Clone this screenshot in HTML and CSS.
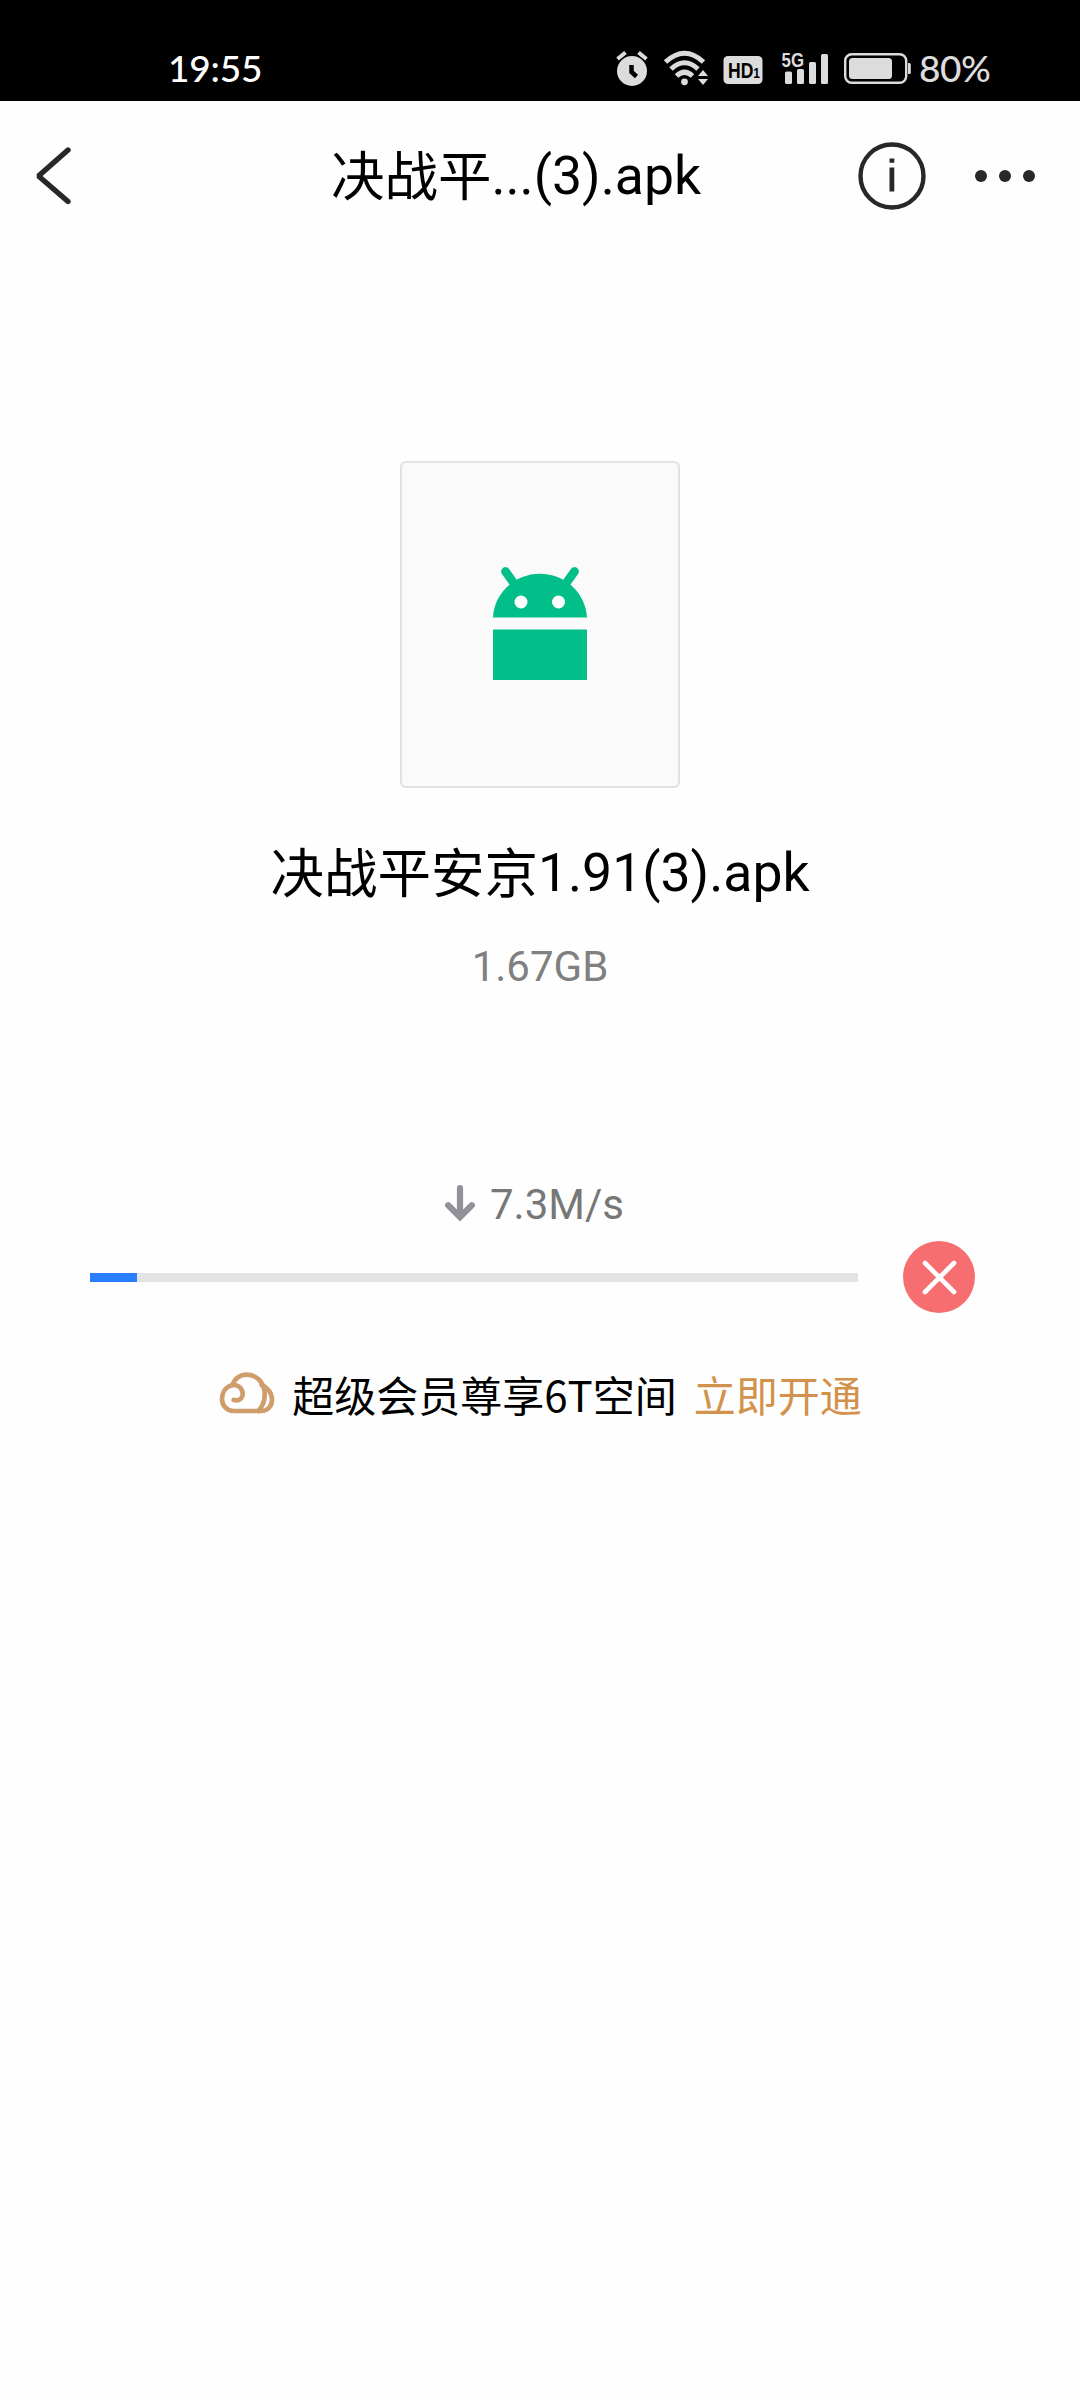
FILE: index.html
```html
<!DOCTYPE html>
<html lang="zh-CN">
<head>
<meta charset="utf-8">
<title>决战平安京1.91(3).apk</title>
<link rel="stylesheet" href="styles.css">
</head>
<body>
<div class="status">
  <span class="time">19:55</span>
  <div class="indicators">
    <svg class="alarm" width="34" height="36" viewBox="615 51 34 36"><circle cx="632" cy="71" r="15" fill="#dcdcdc"/><path d="M617.500 59l8-6.500M646.500 59l-8-6.500" stroke="#dcdcdc" stroke-width="4"/><path d="M631.500 65v7l5 4.500" fill="none" stroke="#000" stroke-width="4.500"/></svg>
    <svg class="wifi" width="46" height="36" viewBox="663 51 46 36"><g fill="none" stroke="#dcdcdc" stroke-width="5"><path d="M665.500 62q19-17.500 38 0"/><path d="M671 69q13.500-12.500 27 0"/><path d="M676.500 76q8-7.500 16 0"/></g><circle cx="684.500" cy="81.800" r="3.400" fill="#dcdcdc"/><path d="M698 76l5-6 5 6zM698 79h10l-5 6z" fill="#dcdcdc"/></svg>
    <svg class="hd" width="40" height="30" viewBox="723 55 40 30"><rect x="723.500" y="56" width="39" height="28" rx="4.500" fill="#dcdcdc"/><text class="hd-text" x="728" y="78.300" textLength="32" lengthAdjust="spacingAndGlyphs">HD<tspan class="hd-one">1</tspan></text></svg>
    <svg class="signal" width="49" height="36" viewBox="781 50 49 36"><text class="net" x="781.500" y="67" textLength="22.500" lengthAdjust="spacingAndGlyphs">5G</text><g fill="#dcdcdc"><rect x="785" y="71.500" width="7" height="12.500" rx="1.500"/><rect x="797" y="69" width="7" height="15" rx="1.500"/><rect x="809" y="62" width="7" height="22" rx="1.500"/><rect x="821" y="54" width="7" height="30" rx="1.500"/></g></svg>
    <svg class="battery" width="68" height="32" viewBox="844 53 68 32"><rect x="845.200" y="54.200" width="61" height="28.600" rx="6.500" fill="none" stroke="#dcdcdc" stroke-width="2.400"/><rect x="849" y="58" width="43" height="21" rx="3.500" fill="#dcdcdc"/><path d="M908 63h1.500q1.300 0 1.300 1.500v8q0 1.500-1.300 1.500H908z" fill="#dcdcdc"/></svg>
    <span class="percent">80%</span>
  </div>
</div>
<header class="topbar">
  <svg class="back" width="40" height="62" viewBox="34 145 40 62"><path d="M68 150L38.500 176l29.500 25.500" fill="none" stroke="#282828" stroke-width="5.400" stroke-linecap="round" stroke-linejoin="bevel"/></svg>
  <h1 class="title"><span class="han">决战平</span>...(3).apk</h1>
  <svg class="info" width="68" height="68" viewBox="0 0 68 68"><circle cx="34" cy="34" r="31.500" fill="none" stroke="#282828" stroke-width="4.400"/><path d="M31.500 16.500h4.800v4.200h-4.800zM31.500 25.500h4.800v24h-4.800z" fill="#282828"/></svg>
  <svg class="more" width="60" height="12" viewBox="0 0 60 12" fill="#282828"><circle cx="6" cy="6" r="6"/><circle cx="30" cy="6" r="6"/><circle cx="54" cy="6" r="6"/></svg>
</header>
<main class="content">
  <div class="file-card">
    <svg width="94" height="113" viewBox="0 0 94 113" fill="#02bf8a"><path d="M0 50.500C1 27 21 6.800 47 6.800S93 27 94 50.500zM0 62.500h94v50.500H0z"/><path d="M12.500 4.500L25 22M81.500 4.500L69 22" stroke="#02bf8a" stroke-width="8.800" stroke-linecap="round"/><circle cx="28" cy="35" r="6.500" fill="#fff"/><circle cx="65.500" cy="35" r="6.500" fill="#fff"/></svg>
  </div>
  <div class="name"><span class="han">决战平安京</span>1.91(3).apk</div>
  <div class="size">1.67GB</div>
  <div class="speed">
    <svg width="30" height="36" viewBox="0 0 30 36"><path d="M15 3v28M3.200 20.200L15 32l11.800-11.800" fill="none" stroke="#919199" stroke-width="6.200" stroke-linecap="round"/></svg>
    <span>7.3M/s</span>
  </div>
  <div class="progress">
    <div class="track"><div class="fill" style="width: 6.100%"></div></div>
    <svg width="72" height="72" viewBox="0 0 72 72"><circle cx="36" cy="36" r="36" fill="#f66e6f"/><path d="M22 22l29 29M51 22L22 51" stroke="#fff" stroke-width="4.600" stroke-linecap="round"/></svg>
  </div>
  <div class="promo">
    <svg width="58" height="45" viewBox="57 60 174 135" fill="none" stroke="#cf9d6c" stroke-width="14" stroke-linecap="round"><path d="M104 150C122 155 135 142 130 124C125 107 108 103 98 106C78 112 69 130 69 147C69 168 85 183 104 183H186C206 183 219 168 219 150C219 128 205 112 188 105"/><path d="M101 105C106 85 124 74 142 74C175 74 194 98 197 128C198 150 192 168 178 183"/></svg>
    <span class="promo-text">超级会员尊享6T空间</span>
    <span class="promo-link">立即开通</span>
  </div>
</main>
</body>
</html>
```
FILE: styles.css
```css
* { box-sizing: border-box; }
body {
  margin: 0;
  min-height: 2400px;
  background: #fefefe;
  color: #000;
  font-family: Roboto, "Noto Sans CJK SC", sans-serif;
}
svg { display: block; flex: none; overflow: visible; }
.status {
  height: 101px;
  padding: 35px 89px 0 168px;
  display: flex;
  justify-content: space-between;
  background: #000;
  color: #fff;
  font-family: Lato, sans-serif;
}
.time { height: 66px; line-height: 66px; font-size: 37px; font-weight: 500; letter-spacing: -0.2px; }
.indicators { height: 68px; display: flex; align-items: center; }
.alarm { margin-right: 14px; }
.wifi { margin-right: 14px; }
.hd { margin: 2px 18px 0 0; }
.signal { margin: -2px 14px 0 0; }
.battery { margin-right: 7px; }
.percent {
  width: 72px;
  height: 68px;
  line-height: 66px;
  color: #dcdcdc;
  font-size: 37px;
  font-weight: 500;
  letter-spacing: -0.4px;
  white-space: nowrap;
}
.hd-text { font: bold 22px "Liberation Sans", sans-serif; }
.hd-one { font-size: 15px; }
.net { font: bold 21px "Liberation Sans", sans-serif; fill: #dcdcdc; }
.topbar {
  height: 150px;
  padding: 0 45px 0 34px;
  display: flex;
  align-items: center;
}
.title {
  flex: 1;
  margin: 0 0 0 100px;
  text-align: center;
  font-size: 53.5px;
  font-weight: 400;
  line-height: 64px;
}
.han { position: relative; top: 2px; }
.info { margin: 0 49px 0 0; }
.content {
  padding-top: 210px;
  display: flex;
  flex-direction: column;
  align-items: center;
}
.file-card {
  width: 280px;
  height: 327px;
  margin-right: 1px;
  padding-bottom: 3px;
  display: flex;
  align-items: center;
  justify-content: center;
  background: #fafafa;
  border: 2px solid #e2e2e2;
  border-radius: 6px;
}
.name { margin-top: 53px; font-size: 53.5px; line-height: 64px; }
.size { margin-top: 37px; color: #808080; font-size: 42px; line-height: 50px; }
.speed {
  margin: 188px 11px 0 0;
  display: flex;
  align-items: center;
  gap: 15px;
  color: #777;
  font-size: 42px;
  line-height: 50px;
}
.speed svg { margin-top: -5px; }
.progress {
  width: 100%;
  margin-top: 11px;
  padding: 0 105px 0 90px;
  display: flex;
  align-items: center;
  gap: 45px;
}
.track { flex: 1; height: 9px; background: #e3e3e3; }
.fill { height: 100%; background: #297eff; }
.promo {
  margin-top: 51px;
  display: flex;
  align-items: center;
  font-family: "Noto Sans CJK SC", sans-serif;
  font-size: 42px;
  line-height: 60px;
}
.promo svg { margin-top: -3px; }
.promo-text { margin-left: 16px; }
.promo-link { margin-left: 17px; color: #d2924b; }
```
